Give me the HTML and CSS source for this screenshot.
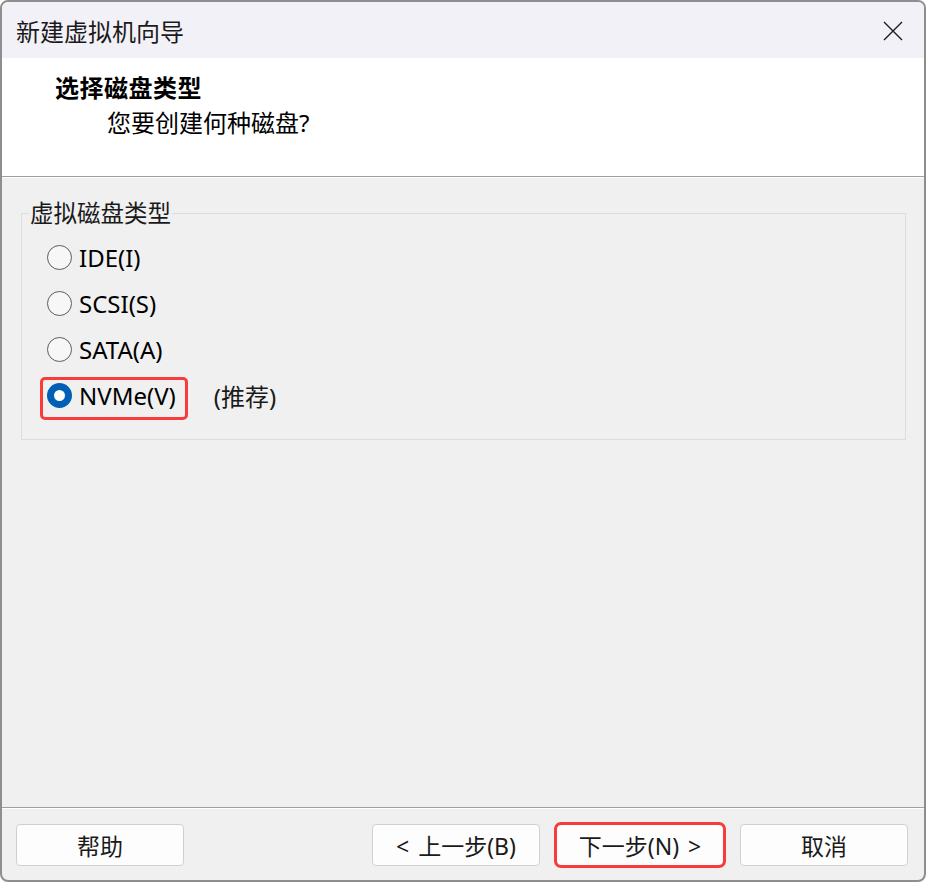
FILE: index.html
```html
<!DOCTYPE html>
<html lang="zh-CN">

<head>
    <meta charset="UTF-8">
    <meta name="viewport" content="width=device-width, initial-scale=1.0">
    <title>新建虚拟机向导</title>
    <link rel="stylesheet" href="styles.css">
</head>

<body>
    <div class="window">
        <div class="titlebar">
            <span class="title">新建虚拟机向导</span>
            <button class="btn-close" aria-label="关闭">
                <svg width="20" height="20" viewBox="0 0 20 20">
                    <path d="M1 1 L19 19 M19 1 L1 19" stroke="#1c1c1c" stroke-width="1.4" fill="none" />
                </svg>
            </button>
        </div>

        <div class="header">
            <div class="header-title">选择磁盘类型</div>
            <div class="header-sub">您要创建何种磁盘?</div>
        </div>
        <div class="sep"></div>

        <div class="content">
            <fieldset class="group">
                <legend>虚拟磁盘类型</legend>
                <div class="option">
                    <label class="radio-label"><span class="radio"></span>IDE(I)</label>
                </div>
                <div class="option">
                    <label class="radio-label"><span class="radio"></span>SCSI(S)</label>
                </div>
                <div class="option">
                    <label class="radio-label"><span class="radio"></span>SATA(A)</label>
                </div>
                <div class="option">
                    <label class="radio-label marked"><span class="radio checked"></span>NVMe(V)</label>
                    <span class="hint">(推荐)</span>
                </div>
            </fieldset>
        </div>

        <div class="sep"></div>
        <div class="footer">
            <button class="btn">帮助</button>
            <div class="btn-group">
                <button class="btn">&lt; 上一步(B)</button>
                <button class="btn btn-marked">下一步(N) &gt;</button>
                <button class="btn">取消</button>
            </div>
        </div>
    </div>
</body>

</html>
```

FILE: styles.css
```css
body {
    margin: 0;
    padding: 0;
    background-color: #ffffff;
    font-family: "Noto Sans", "Noto Sans CJK SC", sans-serif;
    color: #000;
}

.window {
    box-sizing: border-box;
    width: 926px;
    height: 882px;
    border: 2px solid #8e8e8e;
    border-radius: 8px;
    overflow: hidden;
    display: flex;
    flex-direction: column;
    background-color: #f0f0f0;
}

.titlebar {
    height: 56px;
    flex-shrink: 0;
    display: flex;
    align-items: center;
    justify-content: space-between;
    padding: 0 21px 0 14px;
    background-color: #f3f1f8;
}

.title {
    font-size: 24px;
    color: #1a1a1a;
}

.btn-close {
    border: none;
    background: none;
    padding: 0;
    width: 20px;
    height: 20px;
    margin-top: 1px;
}

.header {
    height: 118px;
    flex-shrink: 0;
    box-sizing: border-box;
    background-color: #ffffff;
    padding: 14px 0 0 53px;
}

.header-title {
    font-size: 24px;
    font-weight: bold;
    line-height: 32px;
    letter-spacing: 0.5px;
}

.header-sub {
    font-size: 24px;
    line-height: 32px;
    margin-top: 3px;
    padding-left: 52px;
}

.sep {
    flex-shrink: 0;
    border-top: 1px solid #a0a0a0;
    border-bottom: 1px solid #ffffff;
}

.content {
    flex: 1;
    padding: 22px 18px 0 19px;
}

.group {
    margin: 0;
    padding: 8px 0 21px 25px;
    border: 1px solid #dcdcdc;
    min-inline-size: 0;
}

.group legend {
    font-size: 23.5px;
    line-height: 26px;
    padding: 0 1px;
    margin-left: -18px;
    color: #1a1a1a;
}

.option {
    height: 46px;
    display: flex;
    align-items: center;
}

.radio-label {
    position: relative;
    display: inline-flex;
    align-items: center;
    gap: 7px;
    font-size: 24px;
    height: 25px;
}

.radio {
    box-sizing: border-box;
    width: 25px;
    height: 25px;
    border: 1.5px solid #5c5c5c;
    border-radius: 50%;
    background-color: #f7f7f7;
}

.radio.checked {
    border: 7.5px solid #0060b6;
    background-color: #ffffff;
}

.marked::after {
    content: "";
    position: absolute;
    top: -6px;
    bottom: -12px;
    left: -7px;
    right: -12px;
    border: 3px solid #f83c3c;
    border-radius: 5px;
}

.hint {
    font-size: 24px;
    margin-left: 38px;
    color: #1a1a1a;
}

.footer {
    height: 71px;
    flex-shrink: 0;
    box-sizing: border-box;
    padding: 15px 16px 0 14px;
    display: flex;
    justify-content: space-between;
    align-items: flex-start;
}

.btn-group {
    display: flex;
    gap: 16px;
}

.btn {
    width: 168px;
    height: 42px;
    border: 1px solid #d0d0d0;
    border-radius: 4px;
    background-color: #fdfdfd;
    font-family: "Noto Sans", "Noto Sans CJK SC", sans-serif;
    font-size: 23px;
    color: #1a1a1a;
    padding: 0;
    word-spacing: 3px;
}

.btn-marked {
    border-color: #b8b8b8;
    outline: 3px solid #f83c3c;
    outline-offset: -1px;
    border-radius: 5px;
}
```
